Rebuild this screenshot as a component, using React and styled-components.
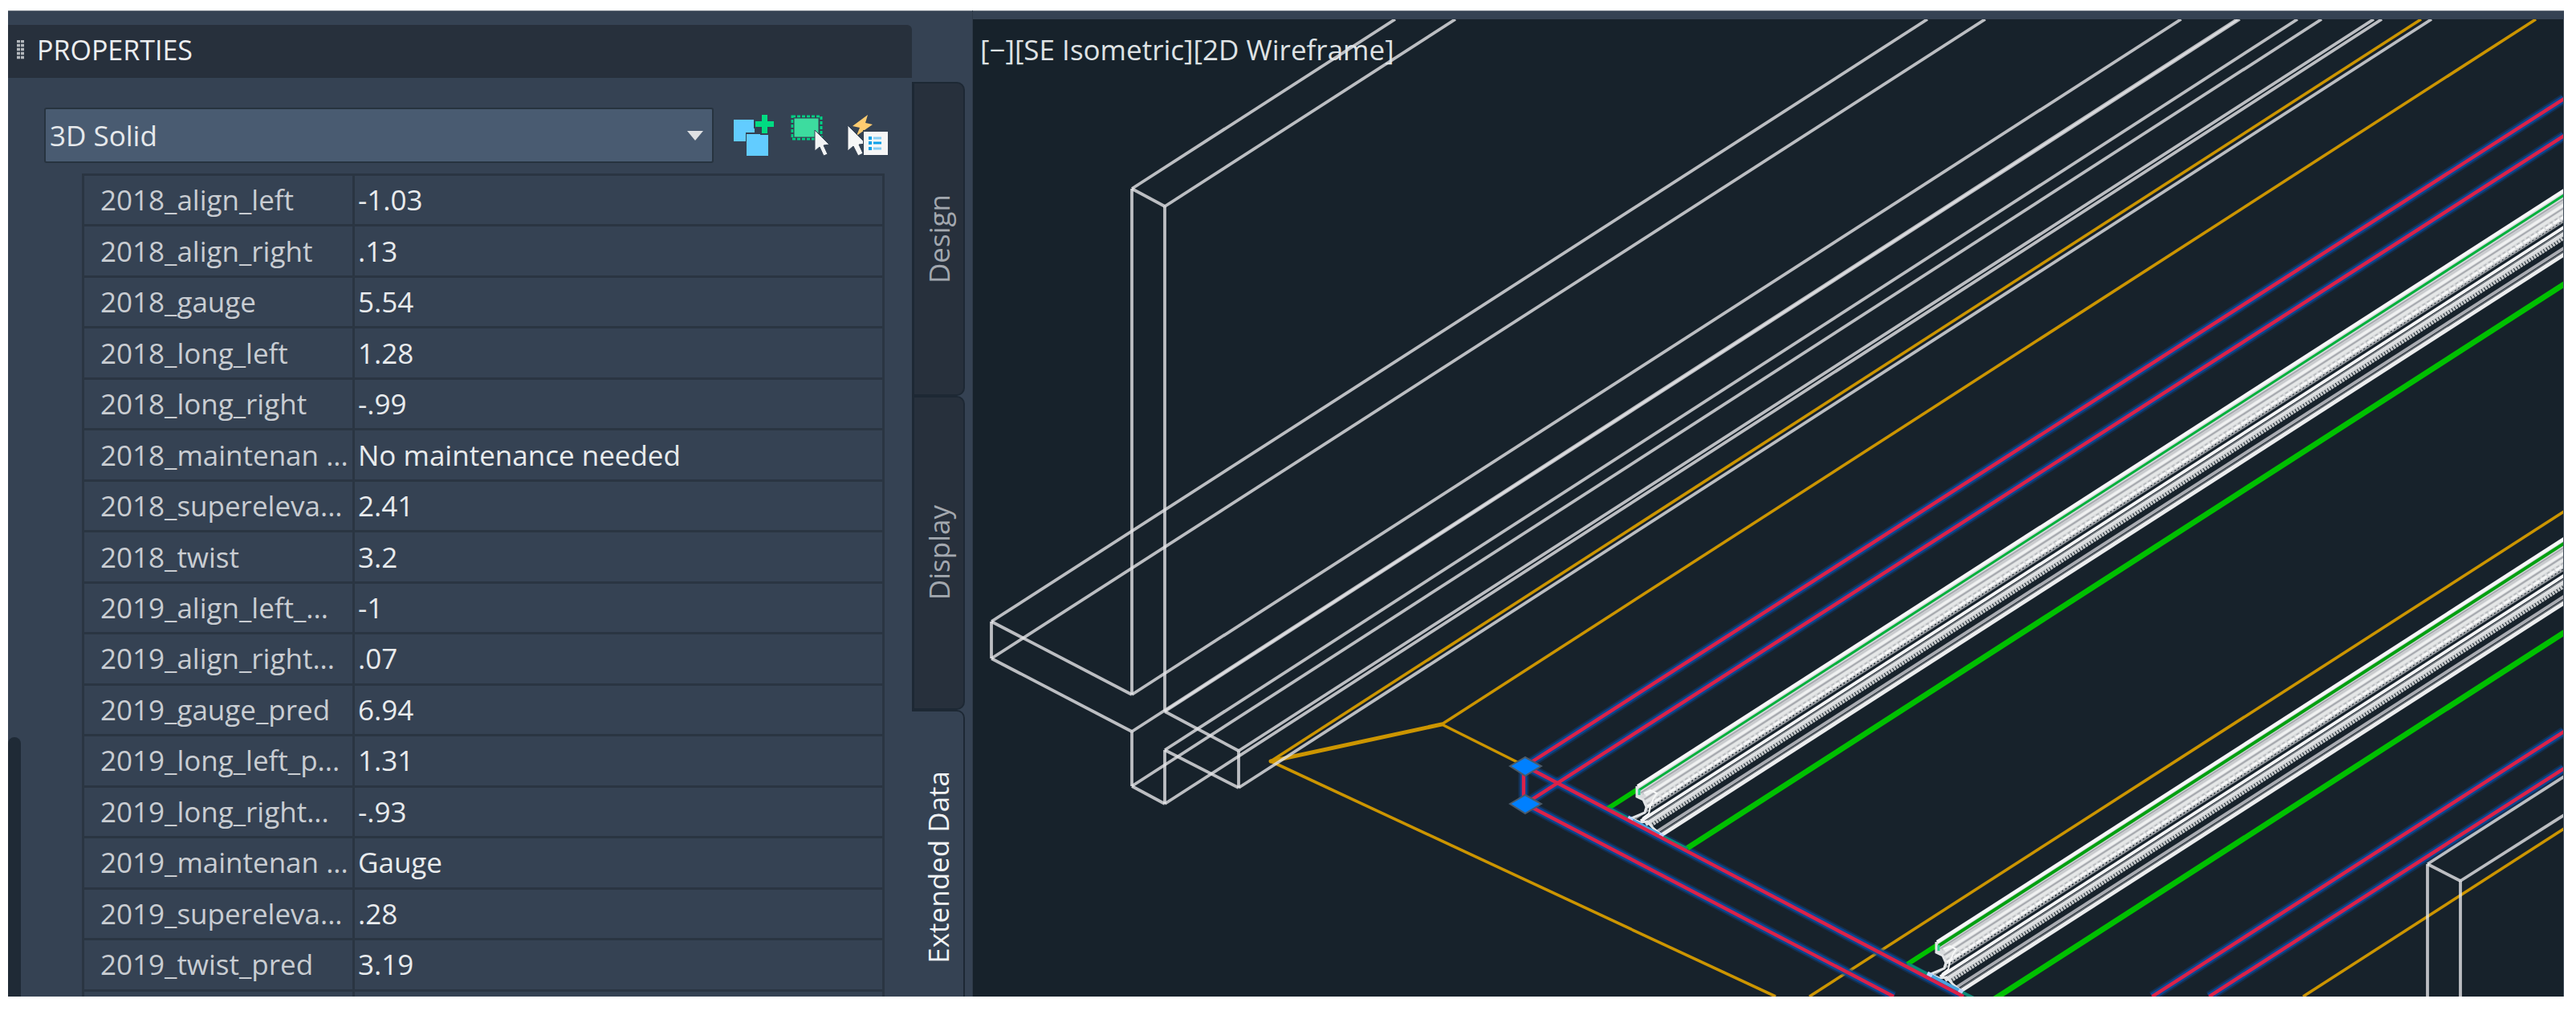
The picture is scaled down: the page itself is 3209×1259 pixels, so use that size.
import React from 'react';
import styled, { createGlobalStyle } from 'styled-components'
import { useState } from "react";

const properties = [
    { name: "2018_align_left", value: "-1.03" },
    { name: "2018_align_right", value: ".13" },
    { name: "2018_gauge", value: "5.54" },
    { name: "2018_long_left", value: "1.28" },
    { name: "2018_long_right", value: "-.99" },
    { name: "2018_maintenan ...", value: "No maintenance needed" },
    { name: "2018_supereleva...", value: "2.41" },
    { name: "2018_twist", value: "3.2" },
    { name: "2019_align_left_...", value: "-1" },
    { name: "2019_align_right...", value: ".07" },
    { name: "2019_gauge_pred", value: "6.94" },
    { name: "2019_long_left_p...", value: "1.31" },
    { name: "2019_long_right...", value: "-.93" },
    { name: "2019_maintenan ...", value: "Gauge" },
    { name: "2019_supereleva...", value: ".28" },
    { name: "2019_twist_pred", value: "3.19" },
];

const tabs = ["Design", "Display", "Extended Data"];

// [x1, y1, x2, y2]
const wallLines = [
    [1410, 235, 1738, 24],
    [1451, 257, 1813, 24],
    [1410, 235, 1451, 257],
    [1410, 235, 1410, 865],
    [1451, 257, 1451, 886],
    [1235, 774, 2401, 24],
    [1235, 820, 2473, 24],
    [1235, 774, 1235, 820],
    [1235, 774, 1410, 865],
    [1235, 820, 1410, 911],
    [1410, 865, 2717, 24],
    [1410, 911, 2787, 24],
    [1451, 886, 2790, 24],
    [1410, 911, 1410, 979],
    [1410, 979, 1451, 1001],
    [1451, 934, 1451, 1001],
    [1451, 886, 1543, 935],
    [1543, 935, 1543, 981],
    [1451, 934, 1543, 981],
    [1451, 934, 2862, 24],
    [1410, 979, 2892, 24],
    [1543, 935, 2957, 24],
    [1451, 1001, 2967, 24],
    [1543, 981, 3029, 24],
    [3024, 1076, 3194, 967],
    [3065, 1097, 3194, 1015],
    [3024, 1076, 3065, 1097],
    [3024, 1076, 3024, 1241],
    [3065, 1097, 3065, 1241],
];

const ballastLines = [
    [1583, 948, 3016, 24],
    [1796, 902, 3159, 24],
    [1583, 948, 2212, 1241],
    [1796, 902, 1900, 954],
    [2254, 1241, 3194, 637],
    [2869, 1241, 3194, 1032],
];

const selectedLines = [
    [1898, 954, 1898, 1001],
    [1900, 954, 3194, 123],
    [1900, 1001, 3194, 169],
    [1900, 954, 2446, 1241],
    [1900, 1001, 2359, 1241],
    [2681, 1241, 3194, 911],
    [2752, 1241, 3194, 957],
];

// every rail edge runs at the same isometric slope: [start x, y at the right edge, color, width, dash]
const SLOPE = 0.643;
const railEdges = [
    [2040, 237, "#f7f8f8", 4],
    [2044, 248, "#a9abb1", 2],
    [2046, 251, "#c8cacd", 2],
    [2050, 255, "#f0f1f1", 3],
    [2048, 259, "#a6a9ae", 2],
    [2051, 263, "#e6e8e8", 3],
    [2052, 267, "#b9bcbf", 2, "4 3"],
    [2052, 270, "#f6f7f7", 3, "9 2"],
    [2050, 274, "#c3c5c8", 3, "3 2"],
    [2034, 276, "#8f9499", 2],
    [2036, 279, "#17222b", 3],
    [2044, 283, "#f5f5f6", 4],
    [2046, 287, "#9b9ea3", 1],
    [2050, 291, "#dcdee0", 5],
    [2056, 296, "#c6c9cb", 5, "3 1"],
    [2064, 309, "#a9abb1", 4],
    [2066, 313, "#85898f", 1],
    [2070, 317, "#ecedee", 5],
];

const Line = ({ points, ...rest }) => (
    <line x1={points[0]} y1={points[1]} x2={points[2]} y2={points[3]} {...rest} />
);

function edge(x, right) {
    return [x, right + SLOPE * (3194 - x), 3214, right - SLOPE * 20];
}

function Rail({ shift, greenWidth, green }) {
    return (
        <g transform={shift}>
            <Line points={edge(2003, 241)} stroke="#00c000" strokeWidth="6" />
            <Line points={edge(2102, 354)} stroke="#00c000" strokeWidth="7" />
            <path d="M2039 979 L2039 992 L2047 996 L2051 1005 L2048 1010 L3214 261 L3214 224 Z" fill="#d9dbdd" />
            {railEdges.map(([x, right, color, width, dash], i) => (
                <Line key={i} points={edge(x, right)} stroke={color} strokeWidth={width} strokeDasharray={dash} />
            ))}
            <Line points={edge(2042, 243)} stroke={green} strokeWidth={greenWidth} />
            <path d="M2039 979 V992 L2047 996 L2051 1005 L2049 1012 L2032 1019 L2043 1024 L2052 1023 L2060 1032 L2070 1040" fill="none" stroke="#e4e6e8" strokeWidth="3" />
            <path d="M2048 988 L2056 984 L2064 988 L2060 994 L2056 1004 L2054 1013 L2046 1019" fill="none" stroke="#f7f8f8" strokeWidth="2" />
            <path d="M2042 983 V990" stroke="#2fd08a" strokeWidth="3" />
            <path d="M2003 1006 L2030 1020 M2070 1041 L2102 1057" stroke="#0b8a78" strokeWidth="4" />
            <path d="M2029 1019 L2071 1041" stroke="#4aa3dd" strokeWidth="4" />
            <path d="M2028 1018 l6 3 M2067 1039 l5 3" stroke="#b9d6ff" strokeWidth="5" />
        </g>
    );
}

function Model() {
    return (
        <Drawing viewBox="1212 24 1982 1217" preserveAspectRatio="xMinYMin slice" aria-hidden="true">
            <g stroke="#cc9500" strokeWidth="3.6">
                {ballastLines.map((points, i) => <Line key={i} points={points} />)}
                <path d="M1583 948 L1796 902" strokeWidth="5" strokeLinecap="round" />
            </g>
            <g stroke="#e6e6e8" strokeOpacity="0.8" strokeWidth="3.8">
                {wallLines.map((points, i) => <Line key={i} points={points} />)}
            </g>
            <g stroke="#0b4a9c" strokeOpacity="0.35" strokeWidth="13">
                {selectedLines.map((points, i) => <Line key={i} points={points} />)}
            </g>
            <g stroke="#0b4a9c" strokeOpacity="0.85" strokeWidth="9">
                {selectedLines.map((points, i) => <Line key={i} points={points} />)}
            </g>
            <Rail green="#00b03c" greenWidth="3" />
            <Rail shift="translate(373 194)" green="#00a010" greenWidth="4" />
            <g stroke="#dc2248" strokeWidth="4.4">
                {selectedLines.map((points, i) => <Line key={i} points={points} />)}
            </g>
            <g fill="#0080ff" stroke="#4b5a68" strokeWidth="2">
                <path d="M1881 954 L1900 943 L1920 954 L1900 966 Z" />
                <path d="M1881 1001 L1900 990 L1920 1001 L1900 1013 Z" />
            </g>
        </Drawing>
    );
}

const PickAddIcon = () => (
    <svg width="52" height="52" viewBox="0 0 52 52">
        <rect x="1" y="6" width="26" height="27" fill="#62ccff" />
        <rect x="16" y="22" width="29" height="29" fill="#344152" />
        <rect x="17" y="24" width="27" height="27" fill="#62ccff" />
        <path d="M26 6 H34 V-1 H45 V6 H54 V17 H45 V25 H34 V17 H26 Z" fill="#344152" />
        <path d="M36 0 H43 V8 H51 V15 H43 V23 H36 V15 H28 V8 H36 Z" fill="#00dc82" />
    </svg>
);

const SelectObjectsIcon = () => (
    <svg width="52" height="52" viewBox="0 0 52 52">
        <rect x="3" y="2" width="36" height="28" fill="none" stroke="#00d084" strokeWidth="3" strokeDasharray="4 2" />
        <rect x="5" y="4" width="31" height="24" fill="#3ddc9f" stroke="#344152" strokeWidth="1" />
        <path d="M31 19 V45 L37 40 L42 51 L47 49 L42 38 L49 37 Z" fill="#f2f3f4" stroke="#344152" />
    </svg>
);

const QuickSelectIcon = () => (
    <svg width="52" height="52" viewBox="0 0 52 52">
        <path d="M26 0 L7 14 L16 16 L12 26 L32 12 L23 10 Z" fill="#ffcc70" />
        <path d="M1 13 V45 L8 39 L14 51 L20 48 L15 37 L24 36 Z" fill="#f6f7f7" stroke="#344152" />
        <rect x="20" y="19" width="32" height="33" fill="#344152" />
        <rect x="21" y="21" width="30" height="29" fill="#f6f6f6" />
        <path d="M27 29 h4 M27 35 h4 M27 42 h4" stroke="#0a9fe8" strokeWidth="4" />
        <path d="M33 29 h10 M33 42 h10" stroke="#86cdf3" strokeWidth="3" />
        <path d="M33 35 h10" stroke="#0a9fe8" strokeWidth="3" />
    </svg>
);

export default function App() {

    const [activeTab, setActiveTab] = useState("Extended Data");

    return (
        <Page>
            <GlobalStyle />
            <Window>
                <Palette>
                    <PaletteHeader>
                        <Grip />
                        <h1>PROPERTIES</h1>
                    </PaletteHeader>
                    <Toolbar>
                        <SelectBox>
                            <select aria-label="Object type" defaultValue="3D Solid">
                                <option>3D Solid</option>
                            </select>
                            <Arrow viewBox="0 0 20 12"><path d="M0 0 H20 L10 12 Z" /></Arrow>
                        </SelectBox>
                        <IconButton aria-label="Toggle PICKADD"><PickAddIcon /></IconButton>
                        <IconButton aria-label="Select objects"><SelectObjectsIcon /></IconButton>
                        <IconButton aria-label="Quick select"><QuickSelectIcon /></IconButton>
                    </Toolbar>
                    <Body>
                        <ScrollThumb />
                        <PropertyTable>
                            <tbody>
                                {properties.map((item) => (
                                    <tr key={item.name}>
                                        <Name scope="row">{item.name}</Name>
                                        <Value>{item.value}</Value>
                                    </tr>
                                ))}
                                <LastRow>
                                    <Name as="td" />
                                    <Value />
                                </LastRow>
                            </tbody>
                        </PropertyTable>
                    </Body>
                </Palette>
                <Tabs role="tablist">
                    {tabs.map((tab) => (
                        <Tab
                            key={tab}
                            role="tab"
                            aria-selected={tab === activeTab}
                            $active={tab === activeTab}
                            onClick={() => setActiveTab(tab)}
                        >
                            <span>{tab}</span>
                        </Tab>
                    ))}
                </Tabs>
                <Viewport>
                    <Model />
                    <ViewControls>
                        <button>[−]</button>
                        <button>[SE Isometric]</button>
                        <button>[2D Wireframe]</button>
                    </ViewControls>
                </Viewport>
            </Window>
        </Page>
    );
}

// ::::::::::Styled-Components::::::::::
const GlobalStyle = createGlobalStyle`
    * {
        box-sizing: border-box;
    }
    body {
        margin: 0;
        background-color: #ffffff;
    }
    body, button, select {
        font-family: "Open Sans", "Noto Sans", sans-serif;
    }
    button {
        padding: 0;
        border: none;
        background: none;
        color: inherit;
        cursor: pointer;
    }
`
const Page = styled.div`
    height: 100vh;
    padding: 13px 15px 18px 10px;
`
const Window = styled.div`
    height: 100%;
    display: grid;
    grid-template-columns: 1126fr 76px 1982fr;
    overflow: hidden;
    background-color: #354253;
    box-shadow: inset 0 1px 0 #6f7984;
`
const Palette = styled.section`
    min-height: 0;
    padding-top: 18px;
    display: flex;
    flex-direction: column;
`
const PaletteHeader = styled.header`
    height: 66px;
    padding: 0 11px 4px;
    border-top-right-radius: 6px;
    background-color: #27303c;

    display: flex;
    align-items: center;
    gap: 16px;

    h1{
        margin: 0;
        font-size: 34px;
        line-height: 48px;
        font-weight: 400;
        color: #eceef0;
    }
`
const Grip = styled.span`
    width: 9px;
    height: 24px;
    background-image:
        linear-gradient(90deg, transparent 4px, #27303c 4px, #27303c 5px, transparent 5px),
        repeating-linear-gradient(#b4b8bd 0 3px, #4a535e 3px 5px);
`
const Toolbar = styled.div`
    padding: 37px 29px 0 45px;

    display: flex;
    align-items: center;
    gap: 19px;
`
const SelectBox = styled.div`
    flex: 1;
    height: 69px;
    margin-right: 5px;
    border: 2px solid #27333f;
    border-radius: 3px;
    background-color: #495b71;

    display: grid;
    align-items: center;

    select{
        grid-area: 1 / 1;
        width: 100%;
        height: 100%;
        padding: 0 5px;
        appearance: none;
        border: none;
        background: none;
        font-size: 35px;
        color: #e6e9ec;
    }
`
const Arrow = styled.svg`
    grid-area: 1 / 1;
    justify-self: end;
    width: 20px;
    height: 12px;
    margin-right: 11px;
    fill: #dfe1e3;
    pointer-events: none;
`
const IconButton = styled.button`
    width: 52px;
    height: 52px;

    svg{
        display: block;
    }
`
const Body = styled.div`
    flex: 1;
    min-height: 0;
    padding: 13px 34px 0 0;

    display: flex;
`
const ScrollThumb = styled.div`
    align-self: flex-end;
    width: 16px;
    height: 323px;
    margin-right: 76px;
    border-radius: 8px 8px 0 0;
    background-color: #1f2a36;
`
const PropertyTable = styled.table`
    flex: 1;
    height: 100%;
    table-layout: fixed;
    border-collapse: collapse;
    border: 3px solid #2a3542;
    border-bottom: none;
`
const Name = styled.th`
    width: 337px;
    padding: 0 0 0 20px;
    border: 3px solid #2a3542;
    text-align: left;
    white-space: nowrap;
    font-size: 35px;
    line-height: 48px;
    font-weight: 400;
    color: #c9cdd2;
`
const Value = styled.td`
    padding: 0 0 0 4px;
    border: 3px solid #2a3542;
    white-space: nowrap;
    font-size: 35px;
    line-height: 48px;
    color: #e8ebed;
`
const LastRow = styled.tr`
    height: 8px;

    td{
        border-bottom: none;
        line-height: 0;
    }
`
const Tabs = styled.div`
    min-height: 0;
    padding: 89px 9px 0 0;
    border-right: 1px solid #2e3a48;

    display: flex;
    flex-direction: column;
`
const Tab = styled.button`
    flex: none;
    height: 391px;
    border: 2px solid #1d2834;
    border-left-width: ${props => props.$active ? "0" : "3px"};
    border-radius: 0 10px 10px 0;
    background-color: ${props => props.$active ? "#354253" : "#27303c"};
    font-size: 35px;
    color: ${props => props.$active ? "#f0f2f4" : "#a3a8af"};

    display: flex;
    align-items: center;
    justify-content: center;

    span{
        writing-mode: vertical-rl;
        transform: rotate(180deg);
    }
`
const Viewport = styled.main`
    min-width: 0;
    min-height: 0;
    margin-top: 11px;
    border-right: 1px solid #3f4b58;
    overflow: hidden;
    background-color: #17222b;

    display: grid;
`
const Drawing = styled.svg`
    grid-area: 1 / 1;
    width: 100%;
    height: 100%;
    min-height: 0;
    contain: size;
`
const ViewControls = styled.div`
    grid-area: 1 / 1;
    align-self: start;
    padding: 14px 9px;

    display: flex;

    button{
        font-size: 35px;
        line-height: 48px;
        color: #dfe2e4;
    }
`
